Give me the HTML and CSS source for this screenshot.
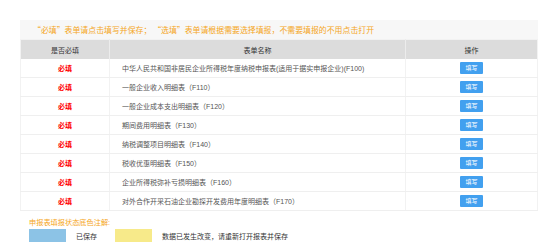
FILE: index.html
```html
<!DOCTYPE html>
<html lang="zh-CN">
<head>
    <meta charset="UTF-8">
    <title>申报表填报</title>
    <link rel="stylesheet" href="styles.css">
</head>
<body>
    <div class="wrap">
        <div class="notice">“必填”表单请点击填写并保存； “选填”表单请根据需要选择填报，不需要填报的不用点击打开</div>

        <table class="form-table">
            <thead>
                <tr>
                    <th class="col-req">是否必填</th>
                    <th class="col-name">表单名称</th>
                    <th class="col-op">操作</th>
                </tr>
            </thead>
            <tbody>
                <tr>
                    <td class="req">必填</td>
                    <td class="name">中华人民共和国非居民企业所得税年度纳税申报表(适用于据实申报企业)(F100)</td>
                    <td class="op"><button class="btn-fill">填写</button></td>
                </tr>
                <tr>
                    <td class="req">必填</td>
                    <td class="name">一般企业收入明细表（F110）</td>
                    <td class="op"><button class="btn-fill">填写</button></td>
                </tr>
                <tr>
                    <td class="req">必填</td>
                    <td class="name">一般企业成本支出明细表（F120）</td>
                    <td class="op"><button class="btn-fill">填写</button></td>
                </tr>
                <tr>
                    <td class="req">必填</td>
                    <td class="name">期间费用明细表（F130）</td>
                    <td class="op"><button class="btn-fill">填写</button></td>
                </tr>
                <tr>
                    <td class="req">必填</td>
                    <td class="name">纳税调整项目明细表（F140）</td>
                    <td class="op"><button class="btn-fill">填写</button></td>
                </tr>
                <tr>
                    <td class="req">必填</td>
                    <td class="name">税收优惠明细表（F150）</td>
                    <td class="op"><button class="btn-fill">填写</button></td>
                </tr>
                <tr>
                    <td class="req">必填</td>
                    <td class="name">企业所得税弥补亏损明细表（F160）</td>
                    <td class="op"><button class="btn-fill">填写</button></td>
                </tr>
                <tr>
                    <td class="req">必填</td>
                    <td class="name">对外合作开采石油企业勘探开发费用年度明细表（F170）</td>
                    <td class="op"><button class="btn-fill">填写</button></td>
                </tr>
            </tbody>
        </table>

        <div class="legend">
            <div class="legend-title">申报表填报状态底色注解:</div>
            <div class="legend-items">
                <span class="swatch saved"></span>
                <span class="legend-text">已保存</span>
                <span class="swatch changed"></span>
                <span class="legend-text">数据已发生改变，请重新打开报表并保存</span>
            </div>
        </div>
    </div>
</body>
</html>
```

FILE: styles.css
```css
body {
    margin: 0;
    padding: 0;
    background: #fff;
    font-family: "Liberation Sans", "Noto Sans CJK SC", sans-serif;
    color: #444;
}

.wrap {
    width: 518px;
    margin: 20px 0 0 20px;
}

.notice {
    height: 19px;
    line-height: 19px;
    padding-left: 13px;
    background: #f7f7f7;
    color: #f5a623;
    font-family: "Noto Sans CJK SC", sans-serif;
    font-size: 7.9px;
    white-space: nowrap;
}

.form-table {
    width: 100%;
    border-collapse: collapse;
    table-layout: fixed;
    font-size: 7px;
    border: 1px solid #f2f2f2;
}

.form-table th {
    height: 19px;
    padding: 0;
    background: #dcdcdc;
    color: #333;
    font-weight: normal;
    border-left: 1px solid #ececec;
}

.form-table th:first-child {
    border-left: none;
}

.col-req { width: 88px; }
.col-op { width: 131px; }

.form-table td {
    height: 18px;
    padding: 0;
    border-bottom: 1px solid #efefef;
    border-left: 1px solid #f2f2f2;
}

.req {
    text-align: center;
    color: #f00;
    font-weight: bold;
}

.name {
    padding-left: 12px !important;
    color: #555;
    white-space: nowrap;
}

.op {
    text-align: center;
}

.btn-fill {
    width: 23px;
    height: 12px;
    padding: 0;
    border: none;
    border-radius: 1px;
    background: #42a0ef;
    color: #fff;
    font-family: inherit;
    font-size: 6px;
    line-height: 12px;
    vertical-align: middle;
}

.legend {
    padding: 7px 0 0 9px;
}

.legend-title {
    color: #f5a623;
    font-size: 7.2px;
    line-height: 10px;
}

.legend-items {
    display: flex;
    align-items: center;
    margin-top: 1px;
    font-size: 7px;
    color: #333;
}

.swatch {
    width: 37px;
    height: 13px;
}

.saved {
    background: #8cc3e6;
}

.changed {
    margin-left: 18px;
    background: #f7ea8a;
}

.legend-text {
    margin-left: 10px;
}
```
